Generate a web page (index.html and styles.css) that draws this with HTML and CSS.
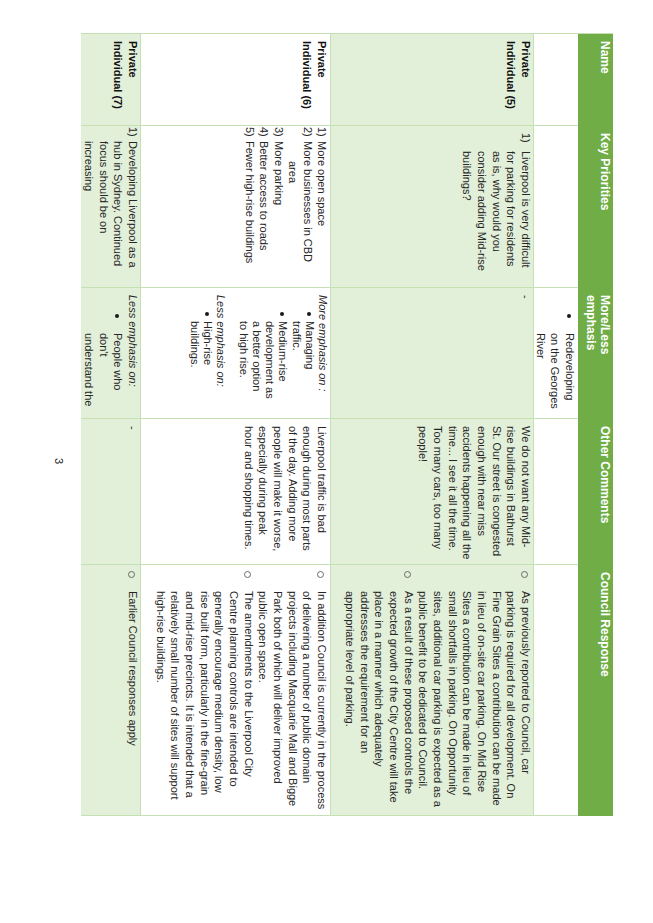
FILE: index.html
```html
<!DOCTYPE html>
<html lang="en">
<head>
<meta charset="utf-8">
<title>Submissions table</title>
<link rel="stylesheet" href="styles.css">
</head>
<body>
<div class="page">
  <div class="tbl">
    <div class="c h">Name</div>
    <div class="c h">Key Priorities</div>
    <div class="c h hm">More/Less emphasis</div>
    <div class="c h">Other Comments</div>
    <div class="c h">Council Response</div>

    <div class="c r1"></div>
    <div class="c r1"></div>
    <div class="c r1 ml">
      <div class="bi"><span class="bd"><i></i></span><span class="bt">Redeveloping on the Georges River</span></div>
    </div>
    <div class="c r1"></div>
    <div class="c r1"></div>

    <div class="c g nm">Private Individual (5)</div>
    <div class="c g kl k2">
      <div class="ki"><span class="kn">1)</span><span class="kt">Liverpool is very difficult for parking for residents as is, why would you consider adding Mid-rise buildings?</span></div>
    </div>
    <div class="c g ml">-</div>
    <div class="c g oc">We do not want any Mid-rise buildings in Bathurst St. Our street is congested enough with near miss accidents happening all the time... I see it all the time. Too many cars, too many people!</div>
    <div class="c g cr">
      <div class="ci"><span class="cm"><i></i></span><span class="ct">As previously reported to Council, car parking is required for all development. On Fine Grain Sites a contribution can be made in lieu of on-site car parking. On Mid Rise Sites a contribution can be made in lieu of small shortfalls in parking. On Opportunity sites, additional car parking is expected as a public benefit to be dedicated to Council.</span></div>
      <div class="ci"><span class="cm"><i></i></span><span class="ct">As a result of these proposed controls the expected growth of the City Centre will take place in a manner which adequately addresses the requirement for an appropriate level of parking.</span></div>
    </div>

    <div class="c nm r3">Private Individual (6)</div>
    <div class="c kl k3 r3">
      <div class="ki"><span class="kn">1)</span><span class="kt">More open space</span></div>
      <div class="ki"><span class="kn">2)</span><span class="kt">More businesses in CBD<br><span class="ind">area</span></span></div>
      <div class="ki"><span class="kn">3)</span><span class="kt">More parking</span></div>
      <div class="ki"><span class="kn">4)</span><span class="kt">Better access to roads</span></div>
      <div class="ki"><span class="kn">5)</span><span class="kt">Fewer high-rise buildings</span></div>
    </div>
    <div class="c ml m3 r3">
      <div class="mh">More emphasis on :</div>
      <div class="bi"><span class="bd"><i></i></span><span class="bt">Managing<br>traffic.</span></div>
      <div class="bi"><span class="bd"><i></i></span><span class="bt">Medium-rise<br>development as<br>a better option<br>to high rise.</span></div>
      <div class="mh gap">Less emphasis on:</div>
      <div class="bi"><span class="bd"><i></i></span><span class="bt">High-rise<br>buildings.</span></div>
    </div>
    <div class="c oc o3 r3">Liverpool traffic is bad<br>enough during most parts<br>of the day. Adding more<br>people will make it worse,<br>especially during peak<br>hour and shopping times.</div>
    <div class="c cr r3">
      <div class="ci"><span class="cm"><i></i></span><span class="ct">In addition Council is currently in the process of delivering a number of public domain projects including Macquarie Mall and Bigge Park both of which will deliver improved public open space.</span></div>
      <div class="ci"><span class="cm"><i></i></span><span class="ct">The amendments to the Liverpool City Centre planning controls are intended to generally encourage medium density, low rise built form, particularly in the fine-grain and mid-rise precincts. It is intended that a relatively small number of sites will support high-rise buildings.</span></div>
    </div>

    <div class="c g nm last">Private Individual (7)</div>
    <div class="c g kl k3 last">
      <div class="ki"><span class="kn">1)</span><span class="kt">Developing Liverpool as a hub in Sydney. Continued focus should be on increasing</span></div>
    </div>
    <div class="c g ml last">
      <div class="mh">Less emphasis on:</div>
      <div class="bi"><span class="bd"><i></i></span><span class="bt">People who don't understand the</span></div>
    </div>
    <div class="c g oc last">-</div>
    <div class="c g cr last">
      <div class="ci"><span class="cm"><i></i></span><span class="ct">Earlier Council responses apply</span></div>
    </div>
  </div>
  <div class="pno">3</div>
</div>
</body>
</html>
```

FILE: styles.css
```css
html, body {
  margin: 0;
  padding: 0;
  background: #ffffff;
}

/* The page is a landscape sheet shown turned a quarter clockwise:
   vertical-rl writing mode runs lines top-to-bottom, stacked right-to-left. */
.page {
  width: 653px;
  height: 923px;
  box-sizing: border-box;
  overflow: hidden;
  writing-mode: vertical-rl;
  text-orientation: sideways;
  padding-block-start: 40px;
  font-family: "Liberation Sans", Arial, sans-serif;
  font-size: 11px;
  line-height: 14.65px;
  color: #262626;
  background: #ffffff;
}

.tbl {
  margin-inline-start: 33px;
  inline-size: 782px;
  display: grid;
  grid-template-columns: 92px 162px 131px 146px 251px;
  grid-template-rows: 35px 45px 203px 190px 59px;
  border-inline-start: 1px solid #c5e0b3;
}

.c {
  box-sizing: border-box;
  border-inline-end: 1px solid #c5e0b3;
  border-block-end: 1px solid #c5e0b3;
  overflow: hidden;
  min-inline-size: 0;
}

.h {
  background: #70ad47;
  color: #ffffff;
  font-weight: bold;
  font-size: 12px;
  line-height: 14px;
  padding-block-start: 1.5px;
  padding-inline-start: 7px;
  padding-inline-end: 12px;
  border-inline-end-color: #70ad47;
  border-block-end-color: #70ad47;
}

.g {
  background: #e2efd9;
}

.r1 {
  padding-block-start: 1px;
}

.r3 {
  padding-block-start: 1px;
}

.last {
  border-block-end: none;
}

/* Name column */
.nm {
  font-weight: bold;
  color: #111111;
  padding-inline-start: 7px;
  padding-inline-end: 7px;
}

/* Key priorities */
.kl {
  padding-inline-end: 11px;
}

.ki {
  display: flex;
}

.kn {
  flex: none;
}

.kt {
  flex: 1;
  min-inline-size: 0;
}

.k2 {
  padding-inline-start: 7px;
}

.k2 .kn {
  inline-size: 18px;
}

.k3 {
  padding-inline-start: 1px;
}

.k3 .kn {
  inline-size: 14px;
}

.r3.k3 {
  line-height: 14.4px;
  white-space: nowrap;
}

.ind {
  padding-inline-start: 20px;
}

/* More / less emphasis */
.ml {
  padding-inline-start: 7px;
  padding-inline-end: 8px;
}

.mh {
  font-style: italic;
}

.bi {
  display: flex;
}

.bd {
  flex: none;
  inline-size: 38px;
  box-sizing: border-box;
  display: flex;
  align-items: flex-start;
  padding-inline-start: 19px;
  padding-block-start: 6px;
}

.bd i {
  display: block;
  inline-size: 4px;
  block-size: 4px;
  border-radius: 50%;
  background: #1a1a1a;
}

.bt {
  inline-size: 77px;
}

.m3 {
  line-height: 13.2px;
  white-space: nowrap;
}

.m3 .bd {
  inline-size: 26px;
  padding-inline-start: 17px;
  padding-block-start: 5px;
}

.m3 .gap {
  margin-block-start: 9.5px;
}

/* Other comments */
.oc {
  padding-inline-start: 7px;
  padding-inline-end: 3.5px;
}

.o3 {
  white-space: nowrap;
}

/* Council response */
.cr {
  padding-inline-end: 4.5px;
}

.ci {
  display: flex;
}

.cm {
  flex: none;
  inline-size: 26px;
  box-sizing: border-box;
  display: flex;
  align-items: flex-start;
  padding-inline-start: 6px;
  padding-block-start: 5px;
}

.cm i {
  display: block;
  inline-size: 5px;
  block-size: 5px;
  border: 1px solid #6a6a6a;
  border-radius: 50%;
}

.ct {
  flex: 1;
  min-inline-size: 0;
}

.pno {
  margin-block-start: 15px;
  text-align: center;
  font-size: 11px;
  line-height: 14px;
  color: #222222;
}
```
